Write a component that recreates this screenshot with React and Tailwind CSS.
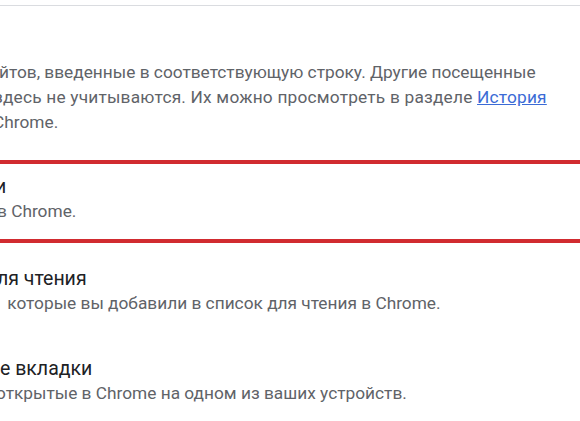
export default function App() {
  return (
    <div className="w-[580px] h-[421px] overflow-hidden bg-white font-['Roboto',sans-serif]">
      <div className="pt-[5px]">
        <div className="h-px bg-[#dadce0]" />
      </div>

      <div className="pt-[54px] text-[17.3px] leading-[25px] text-[#5f6368] whitespace-nowrap">
        <div className="ml-[-1px]">йтов, введенные в соответствующую строку. Другие посещенные</div>
        <div className="ml-[-6px] tracking-[0.2px]">
          здесь не учитываются. Их можно просмотреть в разделе{" "}
          <a href="#" className="text-[#3b6bd6] underline">История</a>
        </div>
        <div className="ml-[-7px]">Chrome.</div>
      </div>

      <div className="mt-[25px] h-[4px] bg-[#d12b30]" />
      <div className="pt-[10px] pb-[15px] whitespace-nowrap">
        <div className="ml-[-5px] text-[19.5px] leading-[25px] text-[#202124]">и</div>
        <div className="ml-[-3px] text-[17.3px] leading-[25px] text-[#5f6368]">в Chrome.</div>
      </div>
      <div className="h-[4px] bg-[#d12b30]" />

      <div className="pt-[23px] whitespace-nowrap">
        <div className="ml-[-3px] text-[19.5px] leading-[25px] text-[#202124]">ля чтения</div>
        <div className="ml-[3px] text-[17.3px] leading-[25px] text-[#5f6368]">&nbsp;которые вы добавили в список для чтения в Chrome.</div>
      </div>

      <div className="pt-[40px] whitespace-nowrap">
        <div className="text-[19.5px] leading-[25px] text-[#202124]">е вкладки</div>
        <div className="ml-[-4px] text-[17.3px] leading-[25px] text-[#5f6368]">открытые в Chrome на одном из ваших устройств.</div>
      </div>
    </div>
  );
}
